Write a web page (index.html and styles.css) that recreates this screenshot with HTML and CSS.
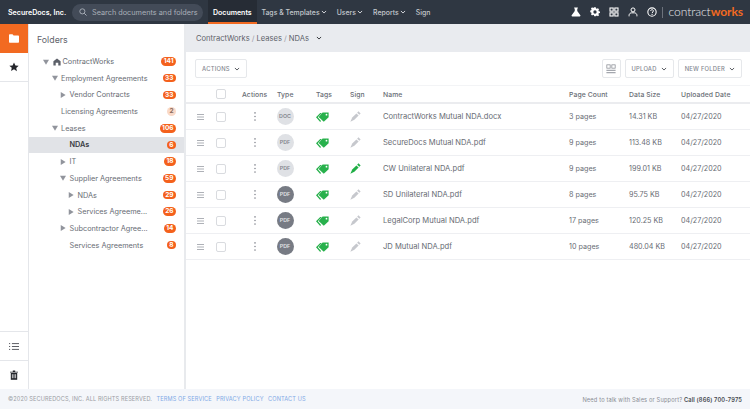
FILE: index.html
```html
<!DOCTYPE html>
<html lang="en">
<head>
<meta charset="utf-8">
<title>ContractWorks</title>
<link rel="stylesheet" href="styles.css">
</head>
<body>
<svg class="defs" width="0" height="0" aria-hidden="true">
  <symbol id="chev" viewBox="0 0 8 8"><path d="M1.200 2.600 4 5.400l2.800-2.800" fill="none" stroke="currentColor" stroke-width="1.300"/></symbol>
  <symbol id="down" viewBox="0 0 8 8"><path d="M0 1h8L4 7.500z" fill="currentColor"/></symbol>
  <symbol id="right" viewBox="0 0 8 8"><path d="M1 0v8l6.500-4z" fill="currentColor"/></symbol>
  <symbol id="tag" viewBox="0 0 13 10"><path d="M0 5.300 4.200 1h1.600L1.800 5.300 5 9l-.8.900z" fill="#28b14c"/><path d="M2.600 5.100 6.600.6H12.600v4.700L7.800 9.800z" fill="#28b14c"/><circle cx="10.500" cy="2.700" r=".9" fill="#fff"/></symbol>
  <symbol id="pen" viewBox="0 0 12 12"><path d="M.4 11.600 2.400 7.200 7 2.600 9.400 5 4.800 9.600z" fill="currentColor"/><path d="M7.800 1.800 9.200.4l2.400 2.400-1.400 1.400z" fill="currentColor"/></symbol>
  <symbol id="drag" viewBox="0 0 7 6"><path d="M0 .5h7M0 3h7M0 5.500h7" stroke="#aeb1b7" stroke-width="1"/></symbol>
  <symbol id="dots" viewBox="0 0 2 10"><circle cx="1" cy="1" r=".9" fill="#8b8e96"/><circle cx="1" cy="5" r=".9" fill="#8b8e96"/><circle cx="1" cy="9" r=".9" fill="#8b8e96"/></symbol>
</svg>

<header class="topbar">
  <div class="brand">SecureDocs, Inc.</div>
  <div class="search">
    <svg class="search-icon" viewBox="0 0 10 10"><circle cx="4.200" cy="4.200" r="3.200" fill="none" stroke="#aeb4bd" stroke-width="1.100"/><path d="m6.600 6.600 2.800 2.800" stroke="#aeb4bd" stroke-width="1.200"/></svg>
    <span>Search documents and folders</span>
  </div>
  <nav class="nav">
    <a class="nav-item active">Documents</a>
    <a class="nav-item">Tags &amp; Templates <svg class="nav-chev"><use href="#chev"/></svg></a>
    <a class="nav-item">Users <svg class="nav-chev"><use href="#chev"/></svg></a>
    <a class="nav-item">Reports <svg class="nav-chev"><use href="#chev"/></svg></a>
    <a class="nav-item">Sign</a>
  </nav>
  <div class="top-tools">
    <svg class="tool" viewBox="0 0 12 12"><path d="M3.800.6h4.400v1.200H7.500v3L11.200 10c.4.800 0 1.400-.8 1.400H1.600c-.8 0-1.200-.6-.8-1.400L4.500 4.800v-3h-.7z" fill="#fff"/></svg>
    <svg class="tool" viewBox="0 0 12 12"><path d="M5 .5h2l.3 1.500 1.100.5 1.300-.8 1.400 1.400-.8 1.300.5 1.100 1.500.3v2l-1.500.3-.5 1.100.8 1.300-1.400 1.400-1.300-.8-1.100.5L7 12H5l-.3-1.500-1.100-.5-1.300.8L.9 9.400l.8-1.300-.5-1.100L0 6.700v-2l1.200-.3.500-1.100L.9 2l1.400-1.400 1.300.8 1.100-.5z" transform="translate(.3 -.2) scale(.95)" fill="#fff"/><circle cx="6" cy="6" r="2" fill="#2f3742"/></svg>
    <svg class="tool" viewBox="0 0 12 12"><g fill="none" stroke="#fff" stroke-width="1.300"><rect x="1.200" y="1.200" width="3.800" height="3.800"/><rect x="7" y="1.200" width="3.800" height="3.800"/><rect x="1.200" y="7" width="3.800" height="3.800"/><rect x="7" y="7" width="3.800" height="3.800"/></g></svg>
    <svg class="tool" viewBox="0 0 12 12"><g fill="none" stroke="#fff" stroke-width="1.200"><circle cx="6" cy="3.500" r="2.400"/><path d="M1.300 11.200V10c0-1.800 1.500-3 3-3h3.400c1.500 0 3 1.200 3 3v1.200"/></g></svg>
    <svg class="tool" viewBox="0 0 12 12"><circle cx="6" cy="6" r="5" fill="none" stroke="#fff" stroke-width="1.300"/><path d="M4.400 4.800c0-2.100 3.300-2.100 3.300-.1 0 1.300-1.600 1.300-1.600 2.600" fill="none" stroke="#fff" stroke-width="1.200"/><circle cx="6.100" cy="8.800" r=".8" fill="#fff"/></svg>
    <span class="logo-sep"></span>
    <span class="logo">contract<b>works</b></span>
  </div>
</header>

<div class="body-wrap">
  <aside class="rail">
    <div class="rail-btn rail-active"><svg class="rail-icon" viewBox="0 0 12 10"><path d="M0 1.200C0 .5.500 0 1.200 0h3l1.300 1.500h5.300c.7 0 1.200.5 1.200 1.200v6.100c0 .7-.5 1.200-1.200 1.200H1.200C.5 10 0 9.500 0 8.800z" fill="#fff"/></svg></div>
    <div class="rail-btn rail-line"><svg class="rail-icon star" viewBox="0 0 12 12"><path d="m6 .5 1.700 3.600 3.900.5-2.900 2.700.8 3.900L6 8.800l-3.500 1.900.8-3.900L.4 4.600l3.900-.5z" fill="#23252b"/></svg></div>
    <div class="rail-spacer"></div>
    <div class="rail-btn rail-top"><svg class="rail-icon" viewBox="0 0 12 10"><g stroke="#3c3f46" stroke-width="1"><path d="M3.500 1.500H12M3.500 5H12M3.500 8.500H12"/><path d="M0 1.500h2M0 5h2M0 8.500h2" stroke-dasharray="1.400 .6"/></g></svg></div>
    <div class="rail-btn rail-top"><svg class="rail-icon trash" viewBox="0 0 10 12"><path d="M3.500.5h3V2H10v1H0V2h3.500z" fill="#23252b"/><path d="M1 3.500h8V12H1z" fill="#23252b"/><path d="M3 5v5M5 5v5M7 5v5" stroke="#fff" stroke-width=".9"/></svg></div>
  </aside>

  <aside class="folders">
    <h2 class="folders-title">Folders</h2>
    <ul class="tree">
      <li class="node l0"><svg class="tw"><use href="#down"/></svg><svg class="home" viewBox="0 0 10 10"><path d="M5 .5 9.500 4v5.500H6.600V6H3.400v3.500H.5V4z" fill="#5c6069"/></svg><span class="name">ContractWorks</span><span class="badge">141</span></li>
      <li class="node l1"><svg class="tw"><use href="#down"/></svg><span class="name">Employment Agreements</span><span class="badge">33</span></li>
      <li class="node l2"><svg class="tw"><use href="#right"/></svg><span class="name">Vendor Contracts</span><span class="badge">33</span></li>
      <li class="node l1 leaf"><span class="name">Licensing Agreements</span><span class="badge pale">2</span></li>
      <li class="node l1"><svg class="tw"><use href="#down"/></svg><span class="name">Leases</span><span class="badge">106</span></li>
      <li class="node l2 leaf selected"><span class="name">NDAs</span><span class="badge">6</span></li>
      <li class="node l2"><svg class="tw"><use href="#right"/></svg><span class="name">IT</span><span class="badge">18</span></li>
      <li class="node l2"><svg class="tw"><use href="#down"/></svg><span class="name">Supplier Agreements</span><span class="badge">59</span></li>
      <li class="node l3"><svg class="tw"><use href="#right"/></svg><span class="name">NDAs</span><span class="badge">29</span></li>
      <li class="node l3"><svg class="tw"><use href="#right"/></svg><span class="name">Services Agreeme...</span><span class="badge">26</span></li>
      <li class="node l2"><svg class="tw"><use href="#right"/></svg><span class="name">Subcontractor Agree...</span><span class="badge">14</span></li>
      <li class="node l2 leaf"><span class="name">Services Agreements</span><span class="badge">8</span></li>
    </ul>
  </aside>

  <main class="main">
    <div class="crumbs"><span>ContractWorks</span><i>/</i><span>Leases</span><i>/</i><span>NDAs</span><svg class="crumb-chev"><use href="#chev"/></svg></div>
    <div class="toolbar">
      <button class="btn">ACTIONS <svg class="btn-chev"><use href="#chev"/></svg></button>
      <div class="toolbar-right">
        <button class="btn square"><svg class="view" viewBox="0 0 12 11"><g fill="none" stroke="#888b93" stroke-width=".9"><rect x="1" y=".5" width="4" height="4"/><rect x="7" y=".5" width="4" height="4"/></g><path d="M.5 6.500h11v1.500H.5zM.5 9h11v1.500H.5z" fill="#a4a7ae"/></svg></button>
        <button class="btn">UPLOAD <svg class="btn-chev"><use href="#chev"/></svg></button>
        <button class="btn">NEW FOLDER <svg class="btn-chev"><use href="#chev"/></svg></button>
      </div>
    </div>
    <div class="row head">
      <span></span><span class="check"></span><span>Actions</span><span>Type</span><span>Tags</span><span>Sign</span><span>Name</span><span>Page Count</span><span>Data Size</span><span>Uploaded Date</span>
    </div>
    <div class="row">
      <svg class="drag"><use href="#drag"/></svg><span class="check"></span><svg class="dots"><use href="#dots"/></svg><span class="type">DOC</span><svg class="tag"><use href="#tag"/></svg><svg class="pen"><use href="#pen"/></svg><span class="file">ContractWorks Mutual NDA.docx</span><span>3 pages</span><span>14.31 KB</span><span>04/27/2020</span>
    </div>
    <div class="row">
      <svg class="drag"><use href="#drag"/></svg><span class="check"></span><svg class="dots"><use href="#dots"/></svg><span class="type">PDF</span><svg class="tag"><use href="#tag"/></svg><svg class="pen"><use href="#pen"/></svg><span class="file">SecureDocs Mutual NDA.pdf</span><span>9 pages</span><span>113.48 KB</span><span>04/27/2020</span>
    </div>
    <div class="row">
      <svg class="drag"><use href="#drag"/></svg><span class="check"></span><svg class="dots"><use href="#dots"/></svg><span class="type">PDF</span><svg class="tag"><use href="#tag"/></svg><svg class="pen signed"><use href="#pen"/></svg><span class="file">CW Unilateral NDA.pdf</span><span>9 pages</span><span>199.01 KB</span><span>04/27/2020</span>
    </div>
    <div class="row">
      <svg class="drag"><use href="#drag"/></svg><span class="check"></span><svg class="dots"><use href="#dots"/></svg><span class="type dark">PDF</span><svg class="tag"><use href="#tag"/></svg><svg class="pen"><use href="#pen"/></svg><span class="file">SD Unilateral NDA.pdf</span><span>8 pages</span><span>95.75 KB</span><span>04/27/2020</span>
    </div>
    <div class="row">
      <svg class="drag"><use href="#drag"/></svg><span class="check"></span><svg class="dots"><use href="#dots"/></svg><span class="type dark">PDF</span><svg class="tag"><use href="#tag"/></svg><svg class="pen"><use href="#pen"/></svg><span class="file">LegalCorp Mutual NDA.pdf</span><span>17 pages</span><span>120.25 KB</span><span>04/27/2020</span>
    </div>
    <div class="row">
      <svg class="drag"><use href="#drag"/></svg><span class="check"></span><svg class="dots"><use href="#dots"/></svg><span class="type dark">PDF</span><svg class="tag"><use href="#tag"/></svg><svg class="pen"><use href="#pen"/></svg><span class="file">JD Mutual NDA.pdf</span><span>10 pages</span><span>480.04 KB</span><span>04/27/2020</span>
    </div>
  </main>
</div>

<footer class="footer">
  <div class="legal">
    <span>©2020 SECUREDOCS, INC. ALL RIGHTS RESERVED.</span>
    <a>TERMS OF SERVICE</a><a>PRIVACY POLICY</a><a>CONTACT US</a>
  </div>
  <div class="support">Need to talk with Sales or Support? <b>Call (866) 700-7975</b></div>
</footer>
</body>
</html>
```
FILE: styles.css
```css
* { box-sizing: border-box; }
html, body { height: 100%; }
body {
  margin: 0;
  display: flex;
  flex-direction: column;
  height: 409px;
  overflow: hidden;
  background: #fff;
  color: #5f636b;
  font-family: Inter, "Liberation Sans", sans-serif;
  font-size: 7.3px;
}
.defs { position: absolute; }
ul { list-style: none; margin: 0; padding: 0; }

/* top bar */
.topbar {
  flex: 0 0 24px;
  display: flex;
  align-items: center;
  background: #2f3742;
  color: #c3c7cd;
  padding-left: 8px;
}
.brand { width: 64px; color: #fff; font-size: 7.100px; font-weight: 600; white-space: nowrap; }
.search {
  width: 131px;
  height: 17px;
  margin-right: 5px;
  display: flex;
  align-items: center;
  gap: 5px;
  padding-left: 7px;
  background: #434b58;
  border-radius: 9px;
  color: #aab0b9;
  font-size: 7.300px;
}
.search-icon { width: 8px; height: 8px; }
.nav { display: flex; height: 24px; }
.nav-item {
  display: flex;
  align-items: center;
  gap: 1.500px;
  padding: 0 4.800px;
  white-space: nowrap;
  font-weight: 500;
  font-size: 6.900px;
}
.nav-item.active {
  padding: 2px 5px 0;
  background: #262c35;
  color: #fff;
  font-size: 7px;
  font-weight: 600;
  border-bottom: 2px solid #f26a21;
}
.nav-chev { width: 6px; height: 6px; color: #d5d8dc; }
.top-tools { margin-left: auto; display: flex; align-items: center; gap: 9px; padding-right: 7px; }
.tool { width: 10px; height: 10px; }
.logo-sep { width: 1px; height: 11px; background: #6c727c; margin: 0 -3px 0 -4px; }
.logo { color: #e6e8ea; font-family: Lato, sans-serif; font-size: 12.100px; font-weight: 300; letter-spacing: -.1px; line-height: 1; }
.logo b { color: #f26a21; font-weight: 700; }

/* three panes */
.body-wrap { flex: 1; display: flex; min-height: 0; }
.rail {
  flex: 0 0 29px;
  display: flex;
  flex-direction: column;
  border-right: 1px solid #e4e6ea;
}
.rail-btn { height: 29px; display: flex; align-items: center; justify-content: center; }
.rail-active { background: #f26a21; }
.rail-line { border-bottom: 1px solid #e4e6ea; }
.rail-top { border-top: 1px solid #e4e6ea; }
.rail-spacer { flex: 1; }
.rail-icon { width: 10px; height: 9px; }
.star { height: 10px; width: 10px; }
.trash { width: 8px; height: 10px; }

.folders { flex: 0 0 157px; border-right: 2px solid #e8eaed; }
.folders-title { margin: 0; height: 28px; padding: 10px 0 0 8px; font-size: 8.800px; font-weight: 400; line-height: 11px; color: #5f636b; }
.tree { margin-top: 1.200px; }
.node {
  height: 16.700px;
  display: flex;
  align-items: center;
  padding-right: 8px;
  white-space: nowrap;
  color: #686c74;
}
.tw { width: 6px; height: 6px; color: #91949c; margin-right: 3.500px; flex: none; }
.l0 { padding-left: 14px; }
.l1 { padding-left: 22.500px; }
.l2 { padding-left: 31px; }
.l3 { padding-left: 39px; }
.l1.leaf { padding-left: 32px; }
.l2.leaf { padding-left: 40.500px; }
.home { width: 8px; height: 8px; margin: 0 2px 0 0; }
.name { flex: 1; }
.selected { background: #e1e3e7; color: #3a3d44; font-weight: 600; }
.badge {
  flex: none;
  min-width: 9px;
  height: 8.500px;
  padding: 0 2.500px;
  border-radius: 5px;
  background: #f4611c;
  color: #fff;
  font-size: 6.500px;
  font-weight: 700;
  line-height: 8.500px;
  text-align: center;
}
.badge.pale { background: #f9d9c8; color: #8a6a5c; }

/* main */
.main { flex: 1; min-width: 0; }
.crumbs {
  height: 28px;
  display: flex;
  align-items: center;
  gap: 2px;
  padding-left: 10px;
  background: #e9ebef;
  color: #5f636b;
  font-size: 7.600px;
}
.crumbs i { font-style: normal; color: #9da0a7; }
.crumb-chev { width: 6px; height: 6px; margin-left: 5px; color: #33363c; }
.toolbar { height: 33px; display: flex; align-items: center; justify-content: space-between; padding: 0 8px 0 9px; }
.toolbar-right { display: flex; gap: 4px; }
.btn {
  height: 19px;
  display: flex;
  align-items: center;
  gap: 4px;
  padding: 0 6px;
  background: #fff;
  border: 1px solid #e6e8eb;
  border-radius: 2px;
  color: #84878f;
  font-family: inherit;
  font-size: 5.800px;
  font-weight: 500;
  letter-spacing: .25px;
}
.btn.square { width: 19px; padding: 0; justify-content: center; }
.view { width: 10px; height: 10px; }
.btn-chev { width: 6px; height: 6px; color: #55585f; }

.row {
  height: 26px;
  display: grid;
  grid-template-columns: 30px 26px 35px 39px 34px 33px 186px 60px 52px 1fr;
  align-items: center;
  border-bottom: 1px solid #eeeff2;
  color: #686c74;
  font-size: 7.200px;
}
.row.head { height: 19px; border-bottom: 2px solid #ebecef; border-top: 1px solid #f3f4f6; font-weight: 500; font-size: 6.800px; letter-spacing: .1px; }
.drag { width: 7px; height: 6px; margin-left: 10.500px; }
.check { width: 10px; height: 10px; border: 1px solid #d9dbdf; border-radius: 2px; }
.dots { width: 2px; height: 9px; margin-left: 11.500px; }
.type {
  width: 17px;
  height: 17px;
  border-radius: 50%;
  background: #dfe1e5;
  color: #83868d;
  font-size: 5.300px;
  font-weight: 600;
  line-height: 17px;
  text-align: center;
  margin-left: -.5px;
}
.type.dark { background: #777b84; color: #e2e3e6; }
.tag { width: 13px; height: 10px; margin-left: -.5px; }
.pen { width: 11px; height: 11px; color: #c6c8cd; }
.pen.signed { color: #1fae45; }
.file { font-size: 7.600px; }

/* footer */
.footer {
  flex: 0 0 20px;
  display: flex;
  align-items: center;
  justify-content: space-between;
  padding: 0 8px;
  background: #f4f6fa;
  color: #999ca3;
  font-size: 5.600px;
  letter-spacing: .12px;
}
.legal { display: flex; gap: 4.500px; }
.legal a { color: #7fa9e6; }
.support { color: #8a8d94; letter-spacing: .15px; font-size: 5.700px; }
.support b { color: #45484e; font-weight: 600; }
```
